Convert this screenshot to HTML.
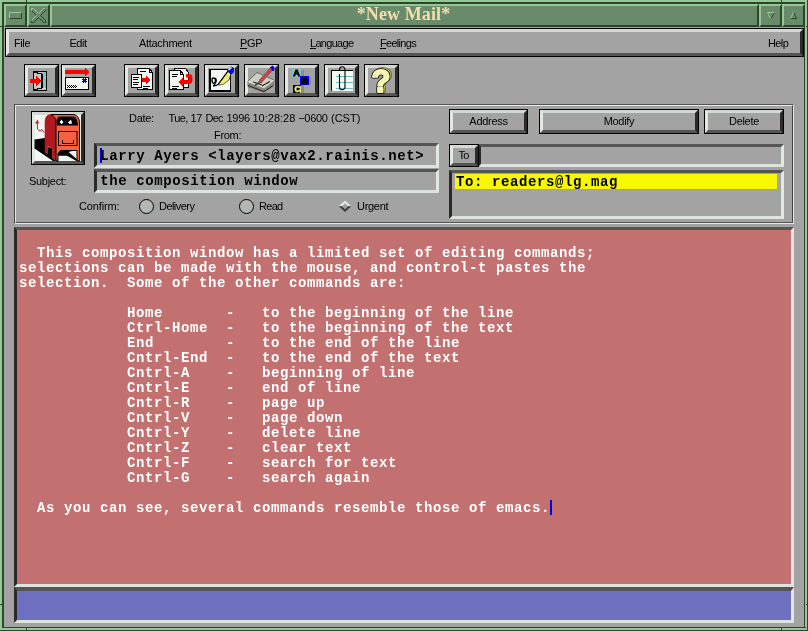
<!DOCTYPE html>
<html>
<head>
<meta charset="utf-8">
<title>*New Mail*</title>
<style>
html,body{margin:0;padding:0;}
body{width:808px;height:631px;overflow:hidden;position:relative;background:#94c894;font-family:"Liberation Sans",sans-serif;font-size:11px;color:#000;}
.abs,.abs *{position:absolute;box-sizing:border-box;}
.abs{left:0;top:0;width:808px;height:631px;will-change:transform;}
/* window frame */
.fr-dark{background:#2d452d;}
.tb{background:#698b69;border-style:solid;border-width:2px;border-color:#94c894 #2d452d #2d452d #94c894;top:4px;height:23px;}
.title{left:50px;width:709px;}
.title span{left:-1px;right:1px;top:-3px;text-align:center;font-family:"Liberation Serif",serif;font-weight:bold;font-size:18px;letter-spacing:0.1px;color:#f2dfb0;line-height:22px;white-space:pre;}
.grey{background:#a3a3a3;}
/* motif bits */
.menubar{left:5px;top:28px;width:799px;height:29px;border:1px solid #000;background:#a3a3a3;}
.menubar .in{left:0;top:0;width:797px;height:27px;border-style:solid;border-width:3px;border-color:#d2d8d2 #2a2a2a #555 #e2e8e2;}
.lbl{white-space:pre;line-height:12px;font-size:11px;margin-top:-1px;letter-spacing:-0.3px;}
.btn{border:1px solid #000;background:#a3a3a3;}
.btn .in{left:0;top:0;right:0;bottom:0;border-style:solid;border-width:3px;border-color:#d2d8d2 #2a2a2a #555 #e2e8e2;}
.btn2 .in{border-width:3px;}
.sunk{border-style:solid;border-width:3px;border-color:#555 #e2e8e2 #dde3dd #2a2a2a;background:#a3a3a3;}
.mono{font-family:"Liberation Mono",monospace;font-weight:bold;font-size:14px;letter-spacing:0.6px;white-space:pre;line-height:15px;}
.abs u{position:static;text-decoration:none;}
.ul{height:1px;background:#000;top:19px;}
</style>
</head>
<body>
<div class="abs">
  <!-- frame -->
  <div class="fr-dark" style="left:2px;top:2px;width:803px;height:2px;"></div>
  <div class="fr-dark" style="left:2px;top:2px;width:2px;height:626px;"></div>
  <div class="fr-dark" style="left:2px;top:627px;width:804px;height:1px;"></div>
  <div class="fr-dark" style="left:804px;top:4px;width:1px;height:624px;"></div>
  <div class="fr-dark" style="left:0;top:630px;width:808px;height:1px;"></div>
  <div class="fr-dark" style="left:807px;top:0;width:1px;height:631px;"></div>
  <!-- corner notches -->
  <div class="fr-dark" style="left:26px;top:0;width:1px;height:2px;"></div>
  <div class="fr-dark" style="left:0;top:26px;width:2px;height:1px;"></div>
  <div class="fr-dark" style="left:781px;top:0;width:1px;height:2px;"></div>
  <div class="fr-dark" style="left:806px;top:26px;width:2px;height:1px;"></div>
  <div class="fr-dark" style="left:26px;top:628px;width:1px;height:3px;"></div>
  <div class="fr-dark" style="left:0;top:604px;width:2px;height:1px;"></div>
  <div class="fr-dark" style="left:781px;top:628px;width:1px;height:3px;"></div>
  <div class="fr-dark" style="left:806px;top:604px;width:2px;height:1px;"></div>
  <div class="grey" style="left:4px;top:27px;width:800px;height:600px;"></div>
  <!-- title bar -->
  <div class="tb" style="left:4px;width:23px;">
    <div style="left:3px;top:6px;width:13px;height:7px;border-style:solid;border-width:1px;border-color:#94c894 #2d452d #2d452d #94c894;"></div>
  </div>
  <div class="tb" style="left:27px;width:23px;"></div>
  <div class="tb title"><span>*New Mail*</span></div>
  <div class="tb" style="left:759px;width:23px;"></div>
  <div class="tb" style="left:782px;width:23px;"></div>
  <svg style="left:0;top:0;" width="808" height="27" viewBox="0 0 808 27" fill="none" stroke-width="1">
    <path d="M31.5 20.5 L31.5 22.5 L33.5 22.5 L38.5 17.5 L43.5 22.5 L45.5 22.5 L45.5 20.5 L40.5 15.5 L45.5 10.5 L45.5 8.5 M31.5 10.5 L36.5 15.5" stroke="#2d452d"/>
    <path d="M31.5 10.5 L31.5 8.5 L33.5 8.5 L38.5 13.5 L43.5 8.5 L45.5 8.5 M36.5 15.5 L31.5 20.5" stroke="#94c894"/>
    <path d="M774.5 12.5 L770.8 18.8" stroke="#2d452d"/>
    <path d="M770.5 18.5 L767.5 12.5 L774.5 12.5" stroke="#94c894"/>
    <path d="M793.5 12 L796.5 18.5 L790.5 18.5" stroke="#2d452d"/>
    <path d="M793.5 12 L790.5 18.5" stroke="#94c894"/>
  </svg>

  <!-- menu bar -->
  <div class="menubar"><div class="in"></div>
    <span class="lbl" style="left:8px;top:9px;letter-spacing:-0.4px;">File</span>
    <span class="lbl" style="left:63.5px;top:9px;letter-spacing:-0.5px;">Edit</span>
    <span class="lbl" style="left:133px;top:9px;">Attachment</span>
    <span class="lbl" style="left:234px;top:9px;"><u>P</u>GP</span>
    <span class="lbl" style="left:304px;top:9px;letter-spacing:-0.7px;"><u>L</u>anguage</span>
    <span class="lbl" style="left:374px;top:9px;letter-spacing:-0.7px;"><u>F</u>eelings</span>
    <span class="lbl" style="left:762px;top:9px;letter-spacing:-0.6px;">Help</span>
    <div class="ul" style="left:234px;width:7px;"></div><div class="ul" style="left:304px;width:6px;"></div><div class="ul" style="left:374px;width:6px;"></div>
  </div>


  <!-- toolbar buttons -->
  <div class="btn" style="left:24px;top:64px;width:35px;height:33px;"><div class="in"></div></div>
  <div class="btn" style="left:61px;top:64px;width:35px;height:33px;"><div class="in"></div></div>
  <div class="btn" style="left:124px;top:64px;width:35px;height:33px;"><div class="in"></div></div>
  <div class="btn" style="left:164px;top:64px;width:35px;height:33px;"><div class="in"></div></div>
  <div class="btn" style="left:204px;top:64px;width:35px;height:33px;"><div class="in"></div></div>
  <div class="btn" style="left:244px;top:64px;width:35px;height:33px;"><div class="in"></div></div>
  <div class="btn" style="left:284px;top:64px;width:35px;height:33px;"><div class="in"></div></div>
  <div class="btn" style="left:324px;top:64px;width:35px;height:33px;"><div class="in"></div></div>
  <div class="btn" style="left:364px;top:64px;width:35px;height:33px;"><div class="in"></div></div>
  <svg style="left:0;top:58px;" width="420" height="44" viewBox="0 58 420 44" shape-rendering="crispEdges">
    <!-- 1: door with arrow -->
    <rect x="33.5" y="71.5" width="13" height="19" fill="#c6cac6" stroke="#000"/>
    <rect x="43" y="72" width="3" height="16" fill="#84c4c4"/>
    <path d="M34 72 H38 L38 74 L34 72.5Z M34 90 H38 L38 88 L34 89.5Z" fill="#000"/>
    <path d="M38 73.5 H42 M38 88.5 H42" stroke="#000" fill="none"/>
    <rect x="41" y="74" width="2" height="14" fill="#000"/>
    <path d="M30 79 H36 V76 L41 81 L36 86 V83 H30Z" fill="#f00"/>
    <!-- 2: send envelope -->
    <path d="M65 70 H85 V68 L89 72 L85 76 V74 H65Z" fill="#f00"/>
    <rect x="65.5" y="77.5" width="23" height="12" fill="#f4f8f4" stroke="#000"/>
    <path d="M83 78h1v1h-1z M85 78h1v1h-1z M82 79h5v1h-5z M83 80h3v1h-3z M82 81h5v1h-5z M83 82h1v1h-1z M85 82h1v1h-1z" fill="#0000f0"/>
    <path d="M67 85.5 H77 M67 87.5 H77" stroke="#000" stroke-dasharray="1 1" fill="none"/>
    <path d="M68 86.5 H77" stroke="#000" stroke-dasharray="1 1" fill="none"/>
    <!-- 3: pages with arrow -->
    <path d="M137.5 68.5 H149.5 L152.5 72.5 V89.5 H137.5Z" fill="#f4f8f4" stroke="#000"/>
    <path d="M149.5 68.5 V72.5 H152.5" fill="none" stroke="#000"/>
    <path d="M140 71.5 H146 M143 86.5 H150 M143 88.5 H148" stroke="#000" fill="none"/>
    <rect x="131.5" y="74.5" width="10" height="13" fill="#f4f8f4" stroke="#000"/>
    <path d="M133 77.5 H139 M133 79.5 H138 M133 82.5 H139 M133 84.5 H138" stroke="#000" fill="none"/>
    <path d="M142 78 H146 V76 L150 80 L146 84 V82 H142Z" fill="#f00"/>
    <!-- 4: pages with return arrow -->
    <path d="M174.5 68.5 H185.5 L188.5 72.5 V87.5 H174.5Z" fill="#f4f8f4" stroke="#000"/>
    <path d="M169.5 70.5 H180.5 L183.5 74.5 V89.5 H169.5Z" fill="#f4f8f4" stroke="#000"/>
    <path d="M180.5 70.5 V74.5 H183.5" fill="none" stroke="#000"/>
    <path d="M172 74.5 H178 M172 76.5 H177 M172 86.5 H179 M172 88.5 H177" stroke="#000" fill="none"/>
    <path d="M186 74 H189 Q192.5 74 192.5 78 V80 Q192.5 84 189 84 H183 V87 L178.5 82 L183 77.5 V80 H187.5 Q189 80 189 78.7 Q189 77.5 187.5 77.5 H186Z" fill="#f00" shape-rendering="auto"/>
    <!-- 5: pen signing -->
    <rect x="209" y="69" width="22" height="23" fill="#000"/>
    <rect x="211" y="70" width="19" height="20" fill="#f4f8f4"/>
    <path d="M215.5 79 Q212 76.5 212 80 Q212 84 215 83 Q217 82 215.5 78 Q215.5 86 213 86 Q216 86 219 84" stroke="#000" stroke-width="1.5" fill="none" shape-rendering="auto"/>
    <path d="M218 85 L228 71.5 L231 74 L229 80 L223 84.5Z" fill="#ecec78" stroke="#000" stroke-width="0.6" shape-rendering="auto"/>
    <path d="M218 84.5 L228 71" stroke="#000" stroke-width="1.2" shape-rendering="auto"/>
    <path d="M227 70.5 L231 66.5 L234 68 L234 72 L231 74.5Z" fill="#0000e8" shape-rendering="auto"/>
    <path d="M228.5 70 L231.5 67.5" stroke="#fff" stroke-width="1.3" shape-rendering="auto"/>
    <!-- 6: notepad with pencil -->
    <g shape-rendering="auto">
    <path d="M248 81 L257 72.5 L274 80 L273 86.5 L264 92 L248 86.5Z" fill="#cfcfbf" stroke="#555" stroke-width="0.8"/>
    <path d="M248 82 L264 88 L274 80.5 L273 86.5 L264 92 L248 86.5Z" fill="#8a8a80"/>
    <path d="M248 85.5 L264 91.5 L273 85.5" stroke="#222" stroke-width="1" fill="none"/>
    <path d="M248 81.5 L264 87.5 L274 80" stroke="#eee" stroke-width="0.8" fill="none"/>
    <path d="M253 82 L262 85 M255 85.5 L260 81.5 M262 86 L270 81.5 M257 83.5 L262 82" stroke="#222" stroke-width="1.1" fill="none"/>
    <path d="M259.5 80 L270.5 67.5 L273 69.5 L262 82Z" fill="#e83838" stroke="#666" stroke-width="0.9"/>
    <path d="M259.5 80 L256.5 84.5 L262 82Z" fill="#666"/>
    <path d="M270 67.5 L272.5 65.5 L274.5 67.5 L274.3 70.5 L272.8 71.2Z" fill="#0000e8"/>
    </g>
    <!-- 7: ABC -->
    <rect x="301" y="70" width="3" height="7" fill="#8c8c8c"/>
    <rect x="301" y="85" width="3" height="8" fill="#8c8c8c"/>
    <rect x="309" y="77" width="2" height="8" fill="#8c8c8c"/>
    <rect x="292" y="69" width="9" height="8" fill="#84c4c4"/>
    <rect x="300" y="76" width="9" height="9" fill="#0000f0"/>
    <rect x="293" y="85" width="8" height="8" fill="#000"/>
    <rect x="300" y="86" width="1" height="7" fill="#e8e870"/>
    <g shape-rendering="auto" font-family="Liberation Sans, sans-serif" font-weight="bold" font-size="8.5px">
      <text x="293.2" y="75.8" fill="#000" stroke="#000" stroke-width="0.8" textLength="6.6" lengthAdjust="spacingAndGlyphs">A</text>
      <text x="301.4" y="83.8" fill="#000" stroke="#000" stroke-width="0.8" textLength="6.4" lengthAdjust="spacingAndGlyphs">B</text>
      <text x="294.6" y="92" fill="#e8e870" stroke="#e8e870" stroke-width="0.7" textLength="6" lengthAdjust="spacingAndGlyphs">C</text>
    </g>
    <!-- 8: clipped note -->
    <rect x="331" y="70" width="22" height="21" fill="#f4f8f4"/>
    <path d="M331.5 70 V91 M331 70.5 H353" stroke="#000" fill="none"/>
    <path d="M336 76.5 H353 M336 82.5 H353 M336 88.5 H353" stroke="#70c0c0" fill="none"/>
    <path d="M339.5 74 V87 a2.75 2.75 0 0 0 5.5 0 V69.5 a2.75 2.75 0 0 0 -5.5 0 V71" stroke="#000" stroke-width="1.1" fill="none" shape-rendering="auto"/>
    <!-- 9: help -->
    <g font-family="Liberation Sans, sans-serif" font-weight="bold" font-size="31px" shape-rendering="auto" stroke-linejoin="round">
      <text x="373" y="91" fill="#e0d860" stroke="#555" stroke-width="3.4">?</text>
      <text x="373" y="91" fill="#e0d860" stroke="#e0d860" stroke-width="2">?</text>
      <text x="371.5" y="92" fill="#f6f6b4" stroke="#000" stroke-width="3.6">?</text>
      <text x="371.5" y="92" fill="#f6f6b4" stroke="#f6f6b4" stroke-width="2">?</text>
    </g>
  </svg>


  <!-- header frame (etched) -->
  <div style="left:14px;top:104px;width:780px;height:120px;border-style:solid;border-width:1px;border-color:#555 #e6eae6 #e6eae6 #444;"></div>
  <div style="left:15px;top:105px;width:778px;height:118px;border-style:solid;border-width:1px;border-color:#e6eae6 #444 #555 #e6eae6;"></div>
  <!-- mailbox icon -->
  <div class="btn" style="left:31px;top:111px;width:54px;height:54px;background:#f2f6f2;"><div class="in"></div></div>
  <svg style="left:31px;top:111px;" width="54" height="54" viewBox="31 111 54 54">
    <path d="M34.5 139.5 L45 138 L45 152 L47.5 153.5 L47.5 147 L52.5 148 L52.5 158 L56 161 L53 161 L34.5 148.5Z" fill="#000"/>
    <path d="M58 153.5 L60.5 150.5 L74 150.5 L68.5 152 L77 159.3 L77 161.2 L67 155.8 L58 155.8Z" fill="#000"/>
    <path d="M45 152 L45 121 Q45.5 115 50 114.5 L53 114.5 Q56.5 118 56.5 124 L56.5 161 L52.5 158 L52.5 148 L47.5 146 L47.5 153.5Z" fill="#b01822" stroke="#b01822" stroke-width="0.6"/>
    <path d="M51 114.5 L74 114.5 Q79.5 116 79.5 123 L79.5 161 L77 161 L77 150.5 L60.5 150.5 L58 153.5 L58 161 L56 161 L56 122 Q56 117 51 114.5Z" fill="#f86040" stroke="#000" stroke-width="1"/>
    <path d="M56.5 120 Q57 116.5 60 116.5 L74 116.5 Q77.5 117.5 78 125.5 L57 125.5Z" fill="#000"/>
    <path d="M59.5 122.5 L61.5 119.5 L63.5 122.5 L61.5 124Z M68 122.5 L71 119.5 L72 123.5 L69.5 124Z" fill="#fff"/>
    <rect x="58.5" y="131.5" width="18.5" height="14" fill="#f86040" stroke="#000" stroke-width="1"/>
    <path d="M62.5 140 V143.5 H73.5 V140" stroke="#000" stroke-width="1" fill="none"/>
    <path d="M44 132.5 L42 129.5 L40 131 L37.5 129 L37.2 122" stroke="#c01822" stroke-width="1" fill="none"/>
    <path d="M35 123.5 L37.6 119.5 L39 123.5Z" fill="#c01822"/>
  </svg>
  <span class="lbl" style="left:129px;top:113px;">Date:</span>
  <span class="lbl" style="left:168.5px;top:113px;letter-spacing:-0.6px;">Tue,</span><span class="lbl" style="left:190.5px;top:113px;">17</span><span class="lbl" style="left:205.5px;top:113px;letter-spacing:-0.8px;">Dec</span><span class="lbl" style="left:226.5px;top:113px;">1996</span><span class="lbl" style="left:252.5px;top:113px;letter-spacing:0;">10:28:28</span><span class="lbl" style="left:298.25px;top:113px;">&#8722;0600</span><span class="lbl" style="left:331px;top:113px;letter-spacing:0;">(CST)</span>
  <span class="lbl" style="left:214px;top:130px;">From:</span>
  <div class="sunk" style="left:94px;top:143px;width:345px;height:25px;">
    <div style="left:3px;top:2px;width:2px;height:15px;background:#0000e0;"></div>
    <span class="mono" style="left:3.3px;top:3px;">Larry Ayers &lt;layers@vax2.rainis.net&gt;</span>
  </div>
  <span class="lbl" style="left:29px;top:176px;">Subject:</span>
  <div class="sunk" style="left:94px;top:169px;width:345px;height:24px;">
    <span class="mono" style="left:3.3px;top:2px;">the composition window</span>
  </div>
  <span class="lbl" style="left:79px;top:201px;letter-spacing:-0.15px;">Confirm:</span>
  <div style="left:139px;top:199px;width:15px;height:15px;border:1px solid #000;border-radius:50%;background:#b4b8b4;"></div>
  <span class="lbl" style="left:159px;top:201px;letter-spacing:-0.55px;">Delivery</span>
  <div style="left:239px;top:199px;width:15px;height:15px;border:1px solid #000;border-radius:50%;background:#b4b8b4;"></div>
  <span class="lbl" style="left:259px;top:201px;letter-spacing:-0.7px;">Read</span>
  <svg style="left:337px;top:199px;" width="16" height="15" viewBox="337 199 16 15">
    <path d="M338.7 206.3 L345 200.4 L351.3 206.3 L348.2 206.3 L345 203.3 L341.8 206.3Z" fill="#e6eae6"/>
    <path d="M338.7 206.3 L345 212.1 L351.3 206.3 L348.2 206.3 L345 209.2 L341.8 206.3Z" fill="#3c3c3c"/>
  </svg>
  <span class="lbl" style="left:357px;top:201px;">Urgent</span>
  <!-- right side buttons -->
  <div class="btn btn2" style="left:449px;top:109px;width:79px;height:25px;"><div class="in"></div><span class="lbl" style="left:0;right:0;top:6px;text-align:center;">Address</span></div>
  <div class="btn btn2" style="left:539px;top:109px;width:160px;height:25px;"><div class="in"></div><span class="lbl" style="left:0;right:0;top:6px;text-align:center;">Modify</span></div>
  <div class="btn btn2" style="left:704px;top:109px;width:80px;height:25px;"><div class="in"></div><span class="lbl" style="left:0;right:0;top:6px;text-align:center;">Delete</span></div>
  <div class="sunk" style="left:478px;top:144px;width:306px;height:23px;"></div>
  <div class="btn btn2" style="left:449px;top:144px;width:30px;height:23px;"><div class="in"></div><span class="lbl" style="left:-1px;right:0;top:5px;text-align:center;letter-spacing:-0.9px;">To</span></div>
  <div class="sunk" style="left:449px;top:170px;width:335px;height:49px;">
    <div style="left:3px;top:1px;width:322px;height:15px;background:#f8f800;"></div>
    <span class="mono" style="left:4px;top:2px;">To: readers@lg.mag</span>
  </div>


  <!-- compose area -->
  <div class="sunk" style="left:14px;top:227px;width:780px;height:360px;background:#c27070;">
    <div class="mono" style="left:2px;top:16px;color:#fff;">  This composition window has a limited set of editing commands;
selections can be made with the mouse, and control-t pastes the
selection.  Some of the other commands are:

            Home       -   to the beginning of the line
            Ctrl-Home  -   to the beginning of the text
            End        -   to the end of the line
            Cntrl-End  -   to the end of the text
            Cntrl-A    -   beginning of line
            Cntrl-E    -   end of line
            Cntrl-R    -   page up
            Cntrl-V    -   page down
            Cntrl-Y    -   delete line
            Cntrl-Z    -   clear text
            Cntrl-F    -   search for text
            Cntrl-G    -   search again

  As you can see, several commands resemble those of emacs.</div>
    <div style="left:533px;top:270px;width:2px;height:15px;background:#0000e0;"></div>
  </div>
  <div class="sunk" style="left:14px;top:587px;width:780px;height:36px;background:#7070c0;border-top-width:4px;"></div>

</div>
</body>
</html>
